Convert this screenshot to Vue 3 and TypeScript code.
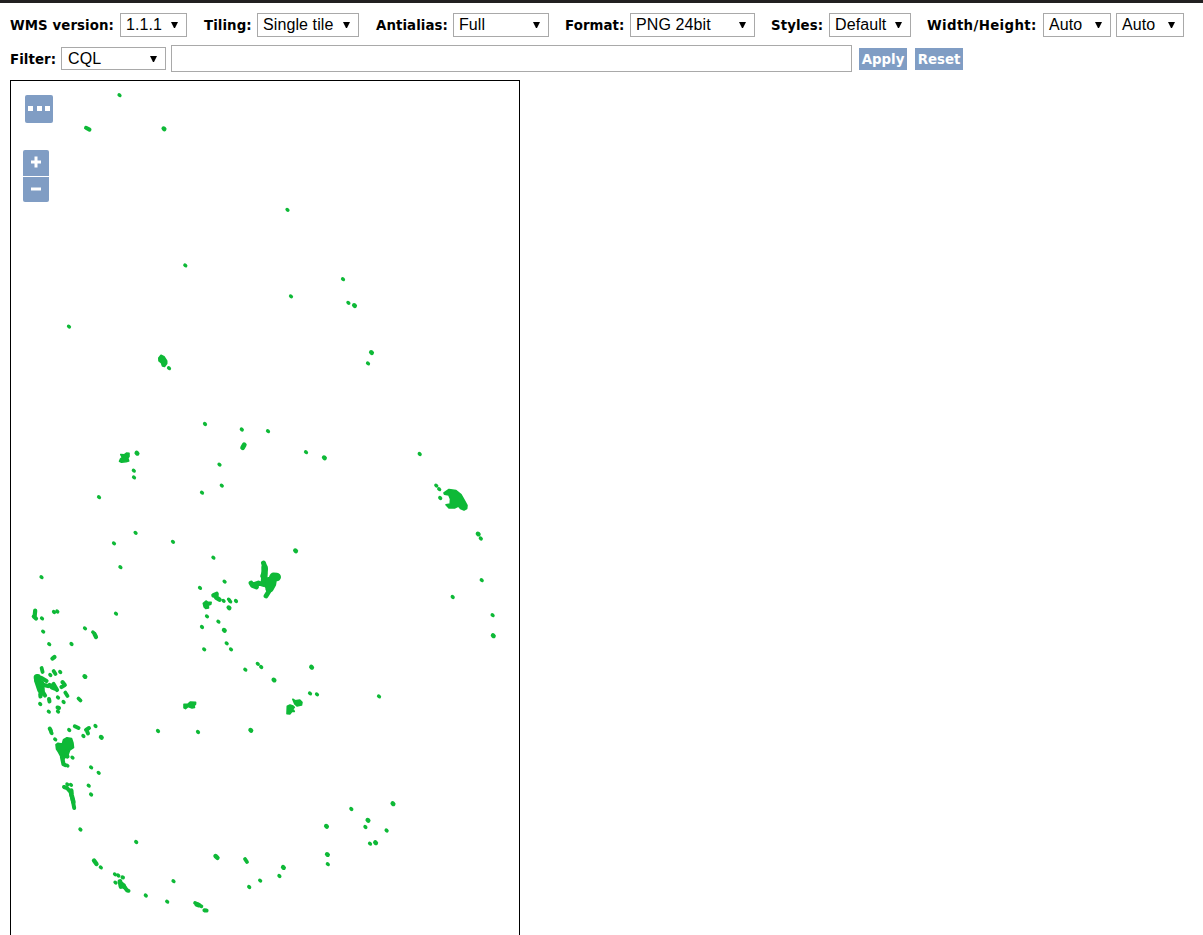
<script setup lang="ts">
interface Field {
  key: string
  label: string
  values: string[]
}

const fields: Field[] = [
  { key: 'version', label: 'WMS version:', values: ['1.1.1'] },
  { key: 'tiling', label: 'Tiling:', values: ['Single tile'] },
  { key: 'antialias', label: 'Antialias:', values: ['Full'] },
  { key: 'format', label: 'Format:', values: ['PNG 24bit'] },
  { key: 'styles', label: 'Styles:', values: ['Default'] },
  { key: 'size', label: 'Width/Height:', values: ['Auto', 'Auto'] },
]

type Point = [number, number]

// Isolated features
const points: Point[] = [
  [119.5, 95.2], [287.5, 209.8], [185.3, 265.4], [343, 279.2], [291, 296.3], [348.4, 302.8],
  [69, 326.6], [368, 363.4], [169, 368.2], [205, 424], [241.8, 429.5], [268, 431.2],
  [306, 452.2], [419.7, 454], [219.5, 464.6], [133.8, 470.7], [134, 477.4], [221.8, 485.6],
  [202, 492.7], [99, 497.2], [135.6, 532.8], [114, 543.3], [173, 541.8], [213.4, 557.7],
  [120.4, 567.2], [436.3, 485.6], [439.2, 489.2], [440.2, 498], [480.8, 538.5], [481.7, 580.2],
  [452.7, 597], [492.6, 615.2], [224.6, 581.6], [200, 587.9], [223.6, 600.8], [229, 599.6],
  [230.2, 601.4], [236, 601], [207, 616.3], [218.4, 621.7], [202, 627], [226.7, 643.3],
  [231, 649.3], [204.2, 649.3], [257.8, 663.8], [261.2, 667], [245.3, 669.7], [310, 693.4],
  [317, 694.3], [379, 696.4], [158, 731], [198, 732], [41.5, 577.2], [116, 613.7],
  [54, 612], [57.3, 611.5], [42, 618.4], [43.2, 631.6], [49.2, 644.2], [71.5, 644],
  [85, 628.3], [93.2, 632.4], [50.3, 675], [60.2, 672], [40.2, 704], [58, 697.5],
  [63.6, 702], [48.8, 711.7], [58, 711.5], [69.2, 730], [83.4, 736], [95.5, 726],
  [72.5, 757.6], [91.1, 767.4], [98.7, 772.8], [88.7, 785.7], [91.1, 794.5], [80.4, 829.5],
  [136.2, 842], [100.8, 867.4], [115, 874.3], [118.3, 875.5], [115.5, 882.6], [145.8, 895.5],
  [173.5, 881.2], [167.2, 901.7], [249.2, 887], [260.2, 880.6], [279.4, 876], [327.8, 864.2],
  [351.3, 809], [365.4, 827], [386.6, 830.5], [370, 843.7], [55.2, 739.4], [51.5, 733],
  [67.4, 784.3], [71, 784.8], [67.4, 765.6],
]

// Features a few pixels wide
const bigPoints: Point[] = [
  [164, 128.8], [354.5, 305.6], [371.5, 352.6], [137, 453.2], [324.4, 457.8],
  [295.6, 550.8], [478.2, 534], [493.3, 635.7], [229, 607.8], [224.3, 630.3], [311.6, 667.2],
  [274, 680], [250.8, 730.3], [84.9, 676.5], [326.5, 826.3], [327.4, 854.5],
  [368, 820.3], [375.6, 842.7], [393, 803.7], [283.4, 867.4], [101.3, 737.3],
]

// Runs of neighbouring features: stroke width and path
const trails: { w: number; d: string }[] = [
  { w: 4, d: 'M86 127.8 L89.5 129.6' },
  { w: 4.8, d: 'M244.3 444.8 L242.6 447.7' },
  { w: 4.2, d: 'M35.2 610.5 L34.6 617 M33.8 616.5 L36 618.5' },
  { w: 4.2, d: 'M94.5 634 L96 637 M52.4 658.6 L54.5 657' },
  { w: 3.8, d: 'M41.6 668 L42.6 672 M53.6 671 L55.5 674 M65.3 692.5 L67.5 696 M78.5 698.5 L80.5 700.5' },
  { w: 4.2, d: 'M49.5 685 L52 687.5 L56 689 M53.5 684 L57 690 M61.5 687 L64.8 685 L62.5 682.2' },
  { w: 4, d: 'M49 699 L49.5 701.5 M57.5 707.5 L59 708 M49.7 728.5 L51 731' },
  { w: 4, d: 'M74.8 726.3 L78.5 728 M86 730 L89 728 M86.5 730 L88 733.5' },
  { w: 4.4, d: 'M94 860.5 L96.5 864 M215.5 856 L217.5 857.8' },
  { w: 3.8, d: 'M245 859 L247 862' },
  { w: 4.8, d: 'M120 881.5 L121 886.5 L123.5 885.5 M121.5 884 L124 886.5' },
  { w: 4, d: 'M124 886.5 L127 890.3 L128.5 890.8 M122.5 877.3 L123 877.5' },
  { w: 4.8, d: 'M197 904.5 L198.5 905' },
  { w: 3.6, d: 'M195 902.8 L201.5 906.3' },
  { w: 4.2, d: 'M204.5 910.3 L206.5 910.5' },
  { w: 4.6, d: 'M213.5 595.3 L216.5 594 L216.2 597.5 L219.5 599.6' },
  { w: 5, d: 'M263.5 563 L265.5 569 L262.8 576' },
  { w: 6.4, d: 'M264.5 567.5 L264.6 573 L264 581 L267 585' },
  { w: 8.4, d: 'M273.5 576.8 L276.8 577 M273 578 L272 584 L269.5 588.5 M269 581 L270 586' },
  { w: 4.8, d: 'M251 583 L252.5 585.5 L256.5 587 M253 585 L258.5 583 L263.5 584.5 M268.5 592 L266 596' },
  { w: 7.6, d: 'M37.5 677.8 L38 680' },
  { w: 6.6, d: 'M37.5 681 L40.5 690 M41 683.5 L41.5 690' },
  { w: 4.2, d: 'M41.5 678 L46.5 681 M44 685 L48 686 M40.3 694 L40.5 696.5 M41 689 L45 695.5' },
  { w: 4, d: 'M64 787 L67 788 L70.5 792 L72.5 799 L74.2 808' },
  { w: 4.6, d: 'M71.2 790.5 L71.6 795 L73.4 802' },
  { w: 4.2, d: 'M62 757 L63.5 764.2 L65 765 M66 752 L67.4 756.5' },
]

// Dense areas
const clusters: string[] = [
  'M158.8 358 L161 355.3 L164 356.8 L166.7 361 L166.7 363.5 L164.5 366.5 L162.5 366 L161.5 363 L159 361 Z',
  'M120.8 454.5 L124.5 454.7 L126.5 453 L129 453.3 L129 456.5 L127.8 458 L128.7 461 L126 461.8 L121.5 462.3 L119.5 461.3 L120.5 459 L122.5 457.5 Z',
  'M444 493 L449 489.5 L456 490.5 L461 494.7 L464 500 L467 505.5 L466.7 508.5 L464 510 L460.5 508.5 L458.5 506 L454.5 508 L449 508 L446 504.8 L450.2 504 L450.5 499 L448.8 495 L444.5 494.3 Z',
  'M203.3 603.3 L206 601 L208 602.4 L211.2 602.2 L210.8 604.3 L208.3 605.3 L208.5 608 L205.7 608.5 L204.2 607 Z',
  'M184 704.3 L188 704 L190.2 702 L195.6 702.4 L195.5 704.3 L194 705.5 L194.5 707.5 L192 707.9 L188 706.6 L185.5 708.6 L184 707.7 Z',
  'M287.3 706.3 L290 705 L293 706 L294.3 707.3 L292.8 709 L294.3 711.5 L291.8 711.5 L289.8 713.9 L287 713.7 Z',
  'M292.8 699.2 L295.2 700.7 L299.8 700 L302 702.2 L301.5 705 L297 706 L294.8 704 Z',
  'M56 744.7 L58 743.2 L62.3 744 L63.5 739.8 L67 737.7 L71.5 738.5 L73 743 L73.5 747.5 L69.7 750 L68.5 753.5 L66.5 756.5 L64.2 758.5 L63 761 L61.2 757 L58.5 752 L56.5 749 Z',
]
</script>

<template>
  <div class="page">
    <form class="toolbar" @submit.prevent>
      <div class="row options">
        <div v-for="f in fields" :key="f.key" class="field" :class="f.key">
          <label>{{ f.label }}</label>
          <button v-for="(v, i) in f.values" :key="i" type="button" class="select">
            <span>{{ v }}</span>
            <svg class="arrow" viewBox="0 0 8 8"><path d="M0 0.5H8L4.6 7.5H3.4Z" /></svg>
          </button>
        </div>
      </div>
      <div class="row filter">
        <label>Filter:</label>
        <button type="button" class="select">
          <span>CQL</span>
          <svg class="arrow" viewBox="0 0 8 8"><path d="M0 0.5H8L4.6 7.5H3.4Z" /></svg>
        </button>
        <input type="text" aria-label="Filter" />
        <a class="action">Apply</a>
        <a class="action">Reset</a>
      </div>
    </form>

    <div class="map">
      <svg class="layer" width="508" height="854" viewBox="11 81 508 854">
        <path v-for="(d, i) in clusters" :key="'c' + i" class="cluster" :d="d" />
        <path v-for="(t, i) in trails" :key="'t' + i" class="trail" :d="t.d" :stroke-width="t.w" />
        <ellipse
          v-for="(p, i) in points" :key="'p' + i" rx="2.3" ry="1.8"
          :transform="`translate(${p[0]} ${p[1]}) rotate(40)`"
        />
        <ellipse
          v-for="(p, i) in bigPoints" :key="'b' + i" rx="2.7" ry="2.3"
          :transform="`translate(${p[0]} ${p[1]}) rotate(40)`"
        />
      </svg>
      <div class="controls">
        <button type="button" class="more" aria-label="Toggle options"><i /><i /><i /></button>
        <button type="button" class="zoom in" aria-label="Zoom in">
          <svg width="12" height="12" viewBox="0 0 12 12"><path d="M1 6H11M6 0.5V11.5" /></svg>
        </button>
        <button type="button" class="zoom out" aria-label="Zoom out">
          <svg width="12" height="12" viewBox="0 0 12 12"><path d="M1 6H11" /></svg>
        </button>
      </div>
    </div>
  </div>
</template>

<style>
html,
body {
  margin: 0;
  overflow: hidden;
  background: #fff;
}
</style>

<style scoped>
.page {
  box-sizing: border-box;
  width: 1203px;
  height: 935px;
  overflow: hidden;
  border-top: 3px solid #222021;
  padding-left: 10px;
  color: #000;
}
.toolbar {
  height: 77px;
  padding-top: 10px;
  box-sizing: border-box;
}
.row {
  display: flex;
  align-items: center;
}
.options {
  height: 24px;
}
.filter {
  height: 27px;
  margin-top: 8px;
}
.field {
  display: flex;
  align-items: center;
}
label {
  flex: none;
  padding-top: 2px;
  font: bold 13.33px/20px 'DejaVu Sans', Verdana, sans-serif;
  letter-spacing: 0.08px;
  white-space: nowrap;
}
.select {
  flex: none;
  display: flex;
  align-items: center;
  justify-content: space-between;
  box-sizing: border-box;
  height: 24px;
  margin: 0;
  padding: 0 8px 0 5px;
  border: 1px solid #a9a9a9;
  border-radius: 0;
  background: #fff;
  color: #000;
  font: 16px/20px 'Liberation Sans', Arial, sans-serif;
  letter-spacing: 0.1px;
  white-space: nowrap;
}
.arrow {
  width: 7px;
  height: 8px;
}
.version label { width: 110px; }
.version .select { width: 67px; }
.tiling label { width: 53px; }
.tiling { margin-left: 17px; }
.tiling .select { width: 102px; }
.antialias label { width: 77px; }
.antialias { margin-left: 17px; }
.antialias .select { width: 96px; }
.format label { width: 65px; }
.format { margin-left: 16px; }
.format .select { width: 125px; }
.styles label { width: 58px; }
.styles { margin-left: 16px; }
.styles .select { width: 82px; }
.size label {
  width: 116px;
  letter-spacing: 0.36px;
}
.size { margin-left: 16px; }
.size .select { width: 68px; }
.size .select + .select { margin-left: 5px; }
.filter label { width: 51px; }
.filter .select {
  width: 105px;
  height: 23px;
  padding-left: 6px;
}
.filter input {
  box-sizing: border-box;
  width: 681px;
  height: 27px;
  margin: 0 7px 0 5px;
  border: 1px solid #a9a9a9;
  padding: 1px 4px;
  font: 16px 'Liberation Sans', Arial, sans-serif;
}
.action {
  width: 48px;
  height: 22px;
  margin-right: 8px;
  background: #809dc4;
  color: #fff;
  text-align: center;
  font: bold 13.33px/23px 'DejaVu Sans', Verdana, sans-serif;
}
.map {
  position: relative;
  box-sizing: border-box;
  width: 510px;
  height: 870px;
  border: 1px solid #000;
}
.layer {
  display: block;
  fill: #0eb937;
}
.cluster {
  stroke: #0eb937;
  stroke-width: 1.6;
  stroke-linejoin: round;
}
.trail {
  fill: none;
  stroke: #0eb937;
  stroke-linecap: round;
  stroke-linejoin: round;
}
.controls {
  position: absolute;
  left: 12px;
  top: 14px;
  display: flex;
  flex-direction: column;
}
.controls button {
  display: flex;
  align-items: center;
  justify-content: center;
  box-sizing: border-box;
  margin: 0;
  border: 0;
  padding: 0;
  background: #809dc4;
}
.controls .more {
  width: 28px;
  height: 28px;
  margin: 0 0 27px 2px;
  border-radius: 2px;
  gap: 3.5px;
  padding: 0 0 1px;
}
.more i {
  width: 5px;
  height: 5px;
  background: #fff;
}
.zoom {
  width: 26px;
  height: 26px;
}
.controls .in {
  border-radius: 2px 2px 0 0;
  padding-bottom: 3px;
}
.controls .out {
  height: 25px;
  margin-top: 1px;
  border-radius: 0 0 2px 2px;
  padding-bottom: 2px;
}
.zoom path {
  stroke: #fff;
  stroke-width: 3;
}
</style>
